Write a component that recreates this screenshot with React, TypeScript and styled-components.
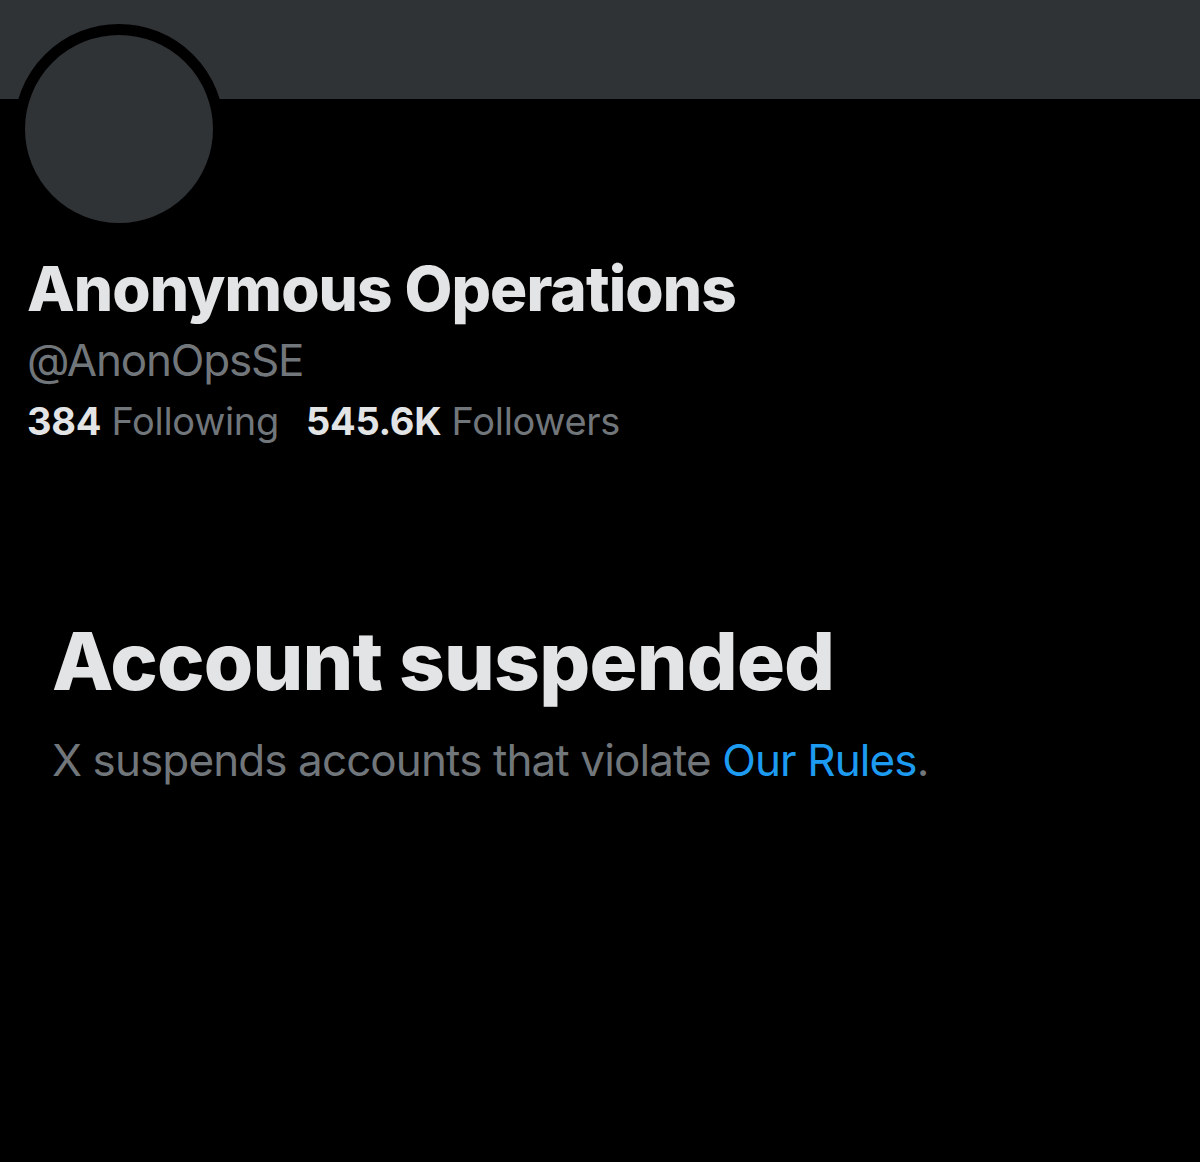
import React from "react";
import styled, { createGlobalStyle } from "styled-components";

const GlobalStyle = createGlobalStyle`
  html, body {
    margin: 0;
    padding: 0;
    background: #000;
  }
  body {
    font-family: Inter, "Noto Sans", "Liberation Sans", sans-serif;
    -webkit-font-smoothing: antialiased;
  }
`;

const Page = styled.div`
  width: 1200px;
  height: 1162px;
  background: #000;
  overflow: hidden;
`;

const Banner = styled.div`
  height: 99px;
  background: #2f3336;
`;

const Header = styled.div`
  position: relative;
  padding: 0 0 0 27px;
`;

// avatar overlaps the banner edge
const Avatar = styled.div`
  position: absolute;
  left: 14px;
  top: -75px;
  width: 188px;
  height: 188px;
  border-radius: 50%;
  background: #2f3336;
  border: 11px solid #000;
`;

const Info = styled.div`
  padding-top: 153px;
  display: flex;
  flex-direction: column;
`;

const Name = styled.h1`
  margin: 0;
  font-size: 62px;
  line-height: 74px;
  font-weight: 800;
  color: #e3e4e5;
  letter-spacing: -0.9px;
`;

const Handle = styled.div`
  margin-top: 8px;
  font-size: 44px;
  line-height: 52px;
  color: #71767b;
  letter-spacing: -1.2px;
`;

const Stats = styled.div`
  margin-top: 12px;
  display: flex;
  gap: 27px;
  font-size: 38px;
  line-height: 46px;
  letter-spacing: -0.3px;
`;

const Stat = styled.span`
  color: #71767b;
`;

const Count = styled.b`
  color: #e3e4e5;
  font-weight: 700;
`;

const Notice = styled.div`
  padding: 169px 0 0 52px;
`;

const Title = styled.h2`
  margin: 0;
  font-size: 80px;
  line-height: 96px;
  font-weight: 800;
  color: #e3e4e5;
  letter-spacing: -0.8px;
`;

const Body = styled.p`
  margin: 25px 0 0;
  font-size: 44px;
  line-height: 52px;
  color: #71767b;
  letter-spacing: -0.9px;
`;

const RulesLink = styled.a`
  color: #1d9bf0;
  text-decoration: none;
`;

export default function App() {
  return (
    <Page>
      <GlobalStyle />
      <Banner />
      <Header>
        <Avatar />
        <Info>
          <Name>Anonymous Operations</Name>
          <Handle>@AnonOpsSE</Handle>
          <Stats>
            <Stat>
              <Count>384</Count> Following
            </Stat>
            <Stat>
              <Count>545.6K</Count> Followers
            </Stat>
          </Stats>
        </Info>
      </Header>
      <Notice>
        <Title>Account suspended</Title>
        <Body>
          X suspends accounts that violate <RulesLink href="#">Our Rules</RulesLink>.
        </Body>
      </Notice>
    </Page>
  );
}
